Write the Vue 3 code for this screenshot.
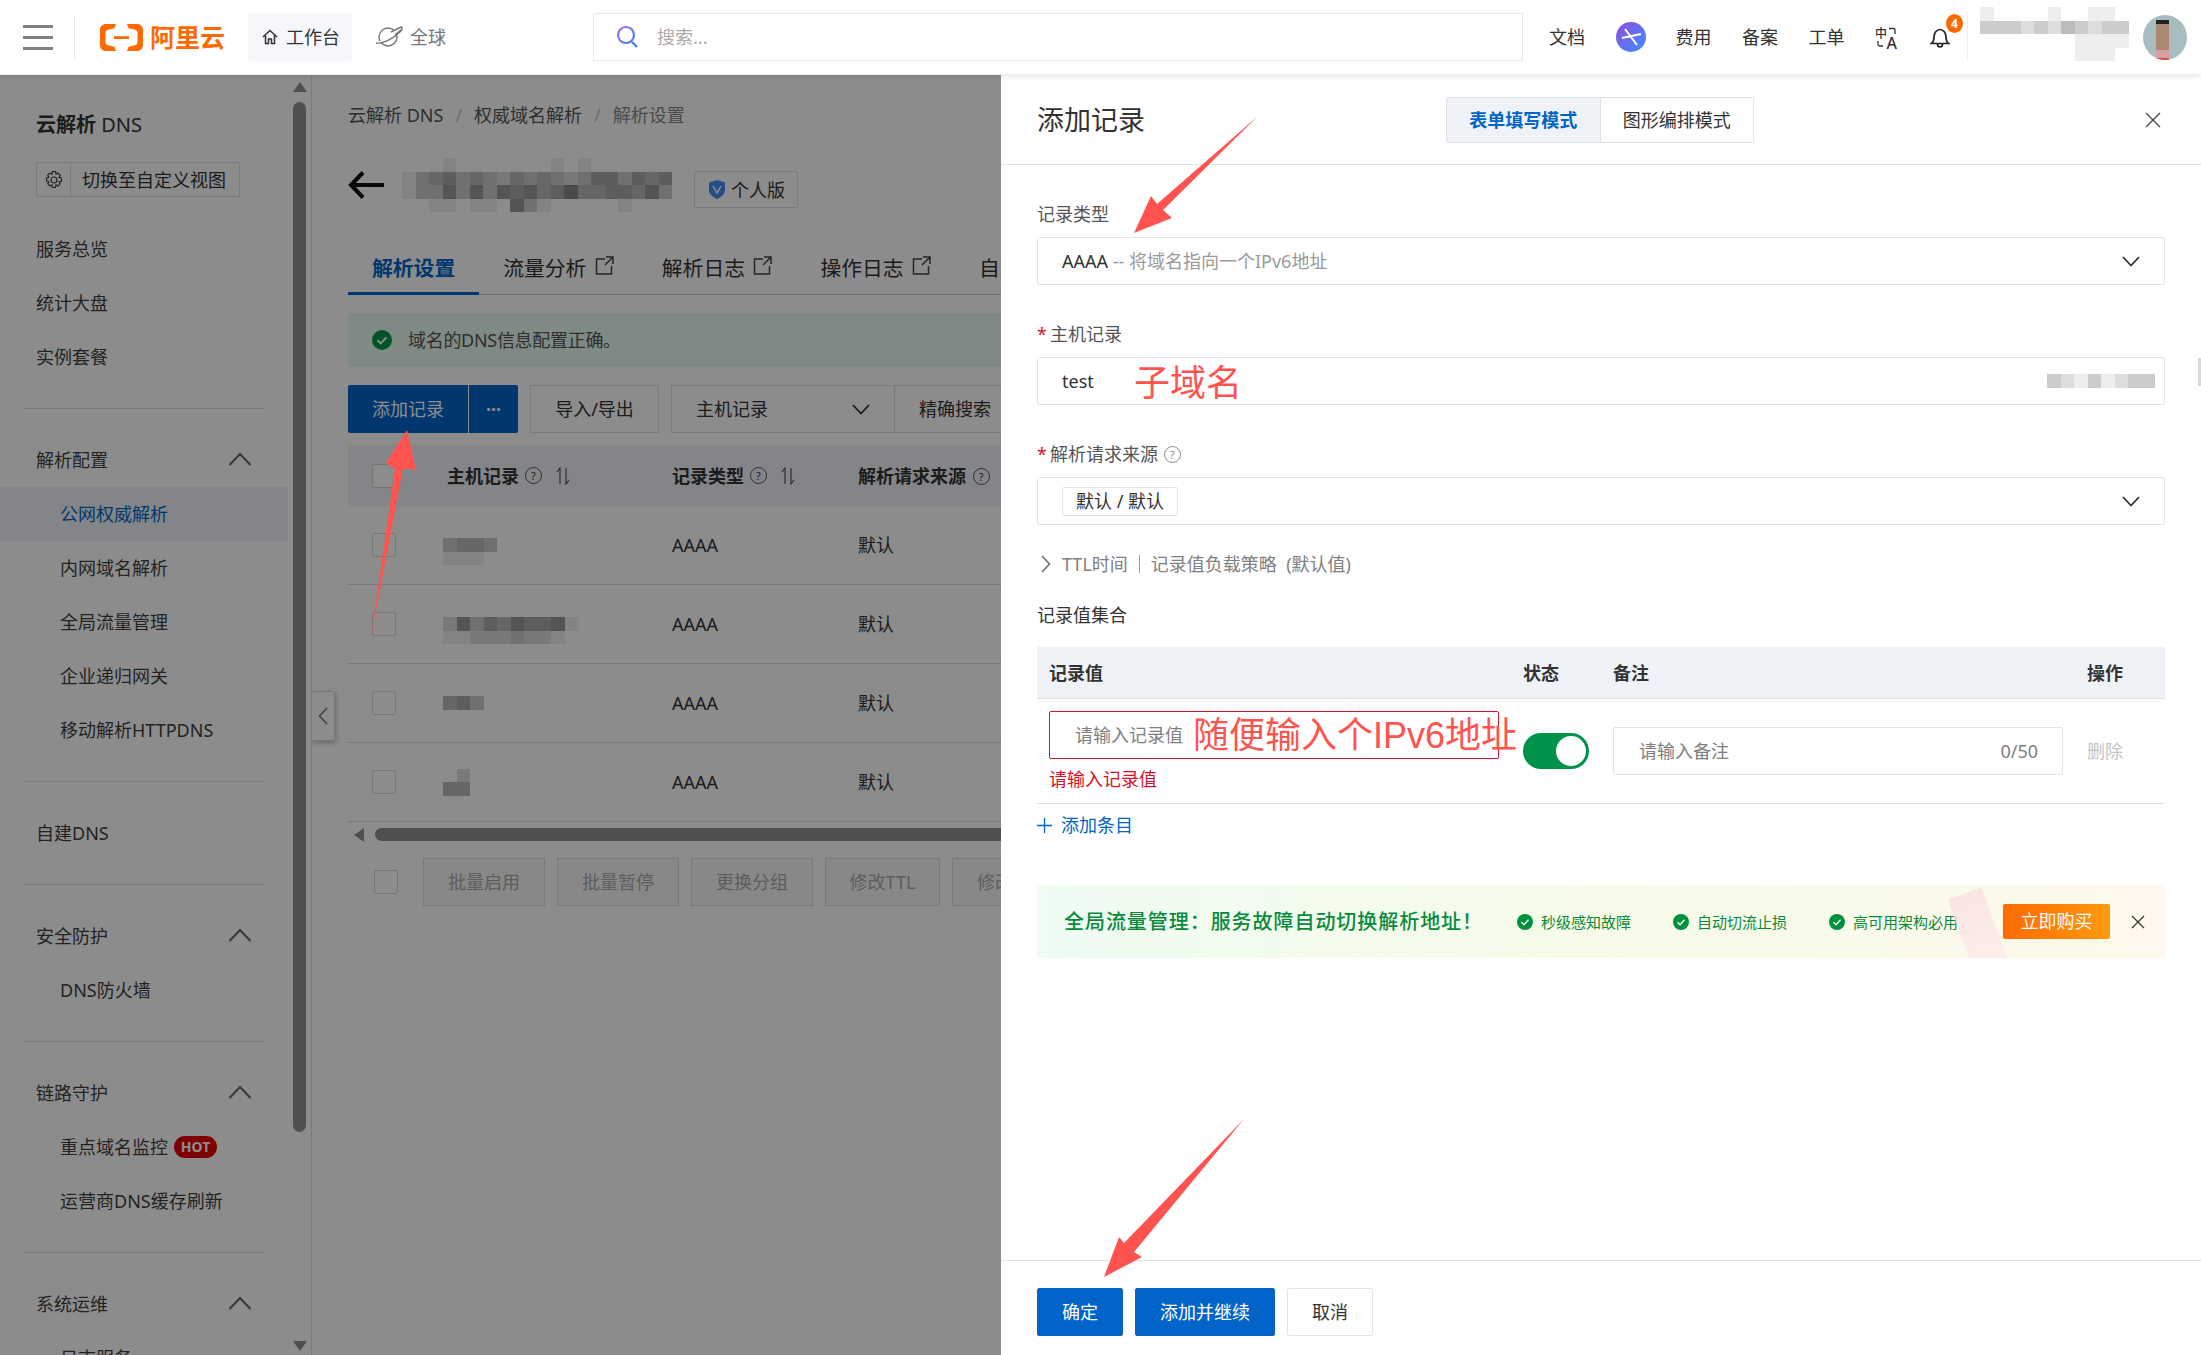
<template>
  <div class="page">
    <!-- 顶栏 -->
    <header class="topbar">
      <div class="burger"><i></i><i></i><i></i></div>
      <div class="logo">
        <svg width="43" height="27" viewBox="0 0 43 27">
          <path fill="#ff6a00" d="M16 0H6C2.5 0 0 2.5 0 6v15c0 3.500 2.500 6 6 6h10l-1.500-4.200-6.500-1.500c-1.500-.4-2.500-1.500-2.500-3V8.700c0-1.500 1-2.600 2.500-3l6.500-1.500z" />
          <path fill="#ff6a00" d="M27 0h10c3.500 0 6 2.500 6 6v15c0 3.500-2.500 6-6 6H27l1.500-4.200 6.500-1.500c1.500-.4 2.500-1.500 2.500-3V8.700c0-1.500-1-2.600-2.500-3l-6.500-1.500z" />
          <rect x="14" y="12.200" width="15" height="2.800" fill="#ff6a00" />
        </svg>
        <span>阿里云</span>
      </div>
      <div class="bench">
        <svg width="16" height="16" viewBox="0 0 16 16" fill="none" stroke="#333" stroke-width="1.500">
          <path d="M1 8l7-6.500L15 8M3.500 6.500V14.500h3V10h3v4.500h3V6.500" />
        </svg>
        <span>工作台</span>
      </div>
      <div class="region">
        <svg width="29" height="24" viewBox="0 0 29 24" fill="none" stroke="#777" stroke-width="1.400">
          <circle cx="13" cy="12" r="9" />
          <path d="M1 18c6 1 16-3 26-13M16 7l10-5c1.500 0 1.500 1.500.5 2.500L20 10" fill="#fff" />
        </svg>
        <span>全球</span>
      </div>
      <div class="search">
        <svg width="24" height="26" viewBox="0 0 24 26" fill="none" stroke-width="2.200">
          <defs>
            <linearGradient id="sg" x1="0" y1="0" x2="1" y2="1">
              <stop offset="0" stop-color="#b06af0" />
              <stop offset="1" stop-color="#3d7bff" />
            </linearGradient>
          </defs>
          <circle cx="10" cy="11" r="8" stroke="url(#sg)" />
          <path d="M16 18l5 5" stroke="#3d7bff" />
        </svg>
        <span>搜索...</span>
      </div>
      <nav class="top-links">
        <span class="w38">文档</span>
        <svg class="spark" width="30" height="30" viewBox="0 0 30 30">
          <defs>
            <linearGradient id="pg" x1="0" y1="0" x2="1" y2="1">
              <stop offset="0" stop-color="#8e4fe0" />
              <stop offset="1" stop-color="#3f8cff" />
            </linearGradient>
          </defs>
          <circle cx="15" cy="15" r="15" fill="url(#pg)" />
          <path d="M9 7l12 16M6 16l19-4" stroke="#fff" stroke-width="2" />
        </svg>
        <span class="w38">费用</span>
        <span class="w38">备案</span>
        <span class="w38">工单</span>
        <span class="trans">
          <svg width="22" height="22" viewBox="0 0 22 22" fill="none" stroke="#333" stroke-width="1.300">
            <path d="M14 1.500h4.500c1 0 1.500.5 1.500 1.500v4M3 14v3.500c0 1 .5 1.500 1.500 1.500H8" />
          </svg>
          <b>中</b><b>A</b>
        </span>
        <span class="bell">
          <svg width="20" height="24" viewBox="0 0 20 24" fill="none" stroke="#222" stroke-width="1.700">
            <path d="M1.500 18.500c2-1.500 2.500-3 2.500-6.500 0-4 2.500-7.500 6-7.500s6 3.500 6 7.500c0 3.500.5 5 2.500 6.500zM7.500 19c0 4 5 4 5 0" />
          </svg>
          <em>4</em>
        </span>
        <span class="top-sep"></span>
        <Mosaic class="name-blur" :size="13.500" :rows="nameBlur" />
        <div class="avatar"><i></i></div>
      </nav>
    </header>

    <div class="body">
      <!-- 左侧导航 -->
      <aside class="sidebar">
        <div class="nav">
          <h2 class="nav-title">云解析 <span>DNS</span></h2>
          <div class="switch-view">
            <span class="gear">
              <svg width="20" height="20" viewBox="0 0 20 20" fill="none" stroke="#444" stroke-width="1.200">
                <path d="M8.500 1.500h3l.5 2.500 2-1 2.300 2.300-1.200 2 2.400.7v3l-2.400.7 1.200 2-2.300 2.300-2-1-.5 2.500h-3l-.5-2.500-2 1-2.300-2.300 1.200-2-2.400-.7v-3l2.400-.7-1.200-2L6 3l2 1z" />
                <circle cx="10" cy="10" r="3" />
              </svg>
            </span>
            <span class="switch-text">切换至自定义视图</span>
          </div>
          <template v-for="(g, gi) in navGroups" :key="gi">
            <div v-if="gi > 0" class="nav-line"></div>
            <div class="nav-group">
              <div v-if="g.title" class="nav-row">
                {{ g.title }}
                <svg v-if="g.fold" class="fold" width="24" height="14" viewBox="0 0 24 14" fill="none" stroke="#666" stroke-width="2">
                  <path d="M1.500 13L12 2l10.500 11" />
                </svg>
              </div>
              <div
                v-for="item in g.items"
                :key="item.text"
                class="nav-row"
                :class="{ sub: g.fold, active: item.active }"
              >
                {{ item.text }}
                <span v-if="item.hot" class="hot">HOT</span>
              </div>
            </div>
          </template>
        </div>
        <div class="side-scroll">
          <i class="tri up"></i>
          <i class="thumb"></i>
          <i class="tri down"></i>
        </div>
      </aside>

      <!-- 解析设置页面 -->
      <main class="main">
        <div class="crumbs">
          <span>云解析 DNS</span><em>/</em><span>权威域名解析</span><em>/</em><span class="last">解析设置</span>
        </div>
        <div class="title-row">
          <svg width="37" height="28" viewBox="0 0 37 28" fill="none" stroke="#111" stroke-width="4">
            <path d="M36 14H3M15 1.500L3 14l12 12.500" />
          </svg>
          <Mosaic class="title-blur" :size="13.500" :rows="titleBlur" />
          <span class="edition">
            <svg width="16" height="19" viewBox="0 0 16 19">
              <path d="M8 0l8 2.500V10c0 4-3.500 7-8 9-4.500-2-8-5-8-9V2.500z" fill="#4a8af0" />
              <path d="M4 6l4 7 4-7" fill="none" stroke="#fff" stroke-width="1.500" />
            </svg>
            个人版
          </span>
        </div>
        <div class="tabs">
          <span class="tab on">解析设置</span>
          <span v-for="t in ['流量分析', '解析日志', '操作日志']" :key="t" class="tab">
            {{ t }}
            <svg width="19" height="19" viewBox="0 0 19 19" fill="none" stroke="#444" stroke-width="1.500">
              <path d="M10 3H1.500v15h15V10M11 1h7v7M18 1l-8 8" />
            </svg>
          </span>
          <span class="tab">自定义</span>
        </div>
        <div class="alert">
          <svg width="20" height="20" viewBox="0 0 20 20">
            <circle cx="10" cy="10" r="10" fill="#009a49" />
            <path d="M5.500 10.200l3.200 3.200 5.800-6" fill="none" stroke="#fff" stroke-width="2" />
          </svg>
          域名的DNS信息配置正确。
        </div>
        <div class="toolbar">
          <div class="btn-add"><span>添加记录</span><span class="more">···</span></div>
          <div class="btn-line w129">导入/导出</div>
          <div class="btn-line host">
            主机记录
            <svg width="18" height="11" viewBox="0 0 18 11" fill="none" stroke="#333" stroke-width="1.800">
              <path d="M1 1l8 8.500L17 1" />
            </svg>
          </div>
          <div class="btn-line exact">精确搜索</div>
        </div>
        <div class="table">
          <div class="t-row t-head">
            <div class="c-check"><i class="box"></i></div>
            <div class="c-host">
              主机记录 <i class="help">?</i>
              <svg class="sort" width="14" height="18" viewBox="0 0 14 18" fill="none" stroke="#555" stroke-width="1.200">
                <path d="M4 17V1L1 5M10 1v16l3-4" />
              </svg>
            </div>
            <div class="c-type">
              记录类型 <i class="help">?</i>
              <svg class="sort" width="14" height="18" viewBox="0 0 14 18" fill="none" stroke="#555" stroke-width="1.200">
                <path d="M4 17V1L1 5M10 1v16l3-4" />
              </svg>
            </div>
            <div class="c-src">解析请求来源 <i class="help">?</i></div>
          </div>
          <div v-for="(r, i) in tableRows" :key="i" class="t-row">
            <div class="c-check"><i class="box"></i></div>
            <div class="c-host"><Mosaic :size="13.500" :rows="r" /></div>
            <div class="c-type">AAAA</div>
            <div class="c-src">默认</div>
          </div>
        </div>
        <div class="h-scroll"><i class="tri left"></i><i class="h-thumb"></i></div>
        <div class="batch">
          <i class="box"></i>
          <span class="b-btn">批量启用</span>
          <span class="b-btn">批量暂停</span>
          <span class="b-btn">更换分组</span>
          <span class="b-btn w115">修改TTL</span>
          <span class="b-btn">修改备注</span>
        </div>
        <div class="collapse">
          <svg width="10" height="18" viewBox="0 0 10 18" fill="none" stroke="#777" stroke-width="1.500">
            <path d="M9 1L1.500 9 9 17" />
          </svg>
        </div>
      </main>
    </div>

    <div class="mask"></div>

    <!-- 添加记录抽屉 -->
    <section class="drawer">
      <div class="d-head">
        <h1>添加记录</h1>
        <div class="mode">
          <span class="mode-on">表单填写模式</span>
          <span>图形编排模式</span>
        </div>
        <svg class="d-close" width="16" height="16" viewBox="0 0 16 16" fill="none" stroke="#444" stroke-width="1.300">
          <path d="M1 1l14 14M15 1L1 15" />
        </svg>
      </div>
      <div class="d-body">
        <div class="field">
          <label>记录类型</label>
          <div class="ctrl">
            <span>AAAA</span><span class="muted">&nbsp;-- 将域名指向一个IPv6地址</span>
            <svg class="arrow" width="18" height="11" viewBox="0 0 18 11" fill="none" stroke="#333" stroke-width="1.800">
              <path d="M1 1l8 8.500L17 1" />
            </svg>
          </div>
        </div>
        <div class="field">
          <label><b>*</b>主机记录</label>
          <div class="ctrl">
            <span>test</span>
            <Mosaic class="suffix" :size="13.500" :rows="suffixBlur" />
          </div>
        </div>
        <div class="field">
          <label><b>*</b>解析请求来源 <i class="help light">?</i></label>
          <div class="ctrl">
            <span class="tag">默认 / 默认</span>
            <svg class="arrow" width="18" height="11" viewBox="0 0 18 11" fill="none" stroke="#333" stroke-width="1.800">
              <path d="M1 1l8 8.500L17 1" />
            </svg>
          </div>
        </div>
        <div class="ttl">
          <svg width="10" height="18" viewBox="0 0 10 18" fill="none" stroke="#666" stroke-width="1.500">
            <path d="M1 1l7.500 8L1 17" />
          </svg>
          <span class="ttl-a">TTL时间</span><i></i><span>记录值负载策略&nbsp;&nbsp;(默认值)</span>
        </div>
        <div class="set-title">记录值集合</div>
        <div class="v-head">
          <span class="vc-val">记录值</span>
          <span class="vc-state">状态</span>
          <span class="vc-note">备注</span>
          <span class="vc-op">操作</span>
        </div>
        <div class="v-row">
          <div class="vc-val">
            <div class="v-input">请输入记录值</div>
            <div class="v-err">请输入记录值</div>
          </div>
          <div class="vc-state"><div class="toggle"><i></i></div></div>
          <div class="vc-note">
            <div class="note-input"><span>请输入备注</span><span>0/50</span></div>
          </div>
          <div class="vc-op del">删除</div>
        </div>
        <div class="add-item">
          <svg width="15" height="15" viewBox="0 0 15 15" stroke="#0064c8" stroke-width="1.300">
            <path d="M7.500 0v15M0 7.500h15" />
          </svg>
          <span>添加条目</span>
        </div>
        <div class="promo">
          <i class="envelope"></i>
          <strong>全局流量管理&#xFF1A;服务故障自动切换解析地址&#xFF01;</strong>
          <span v-for="p in promoItems" :key="p" class="promo-item">
            <svg width="16" height="16" viewBox="0 0 16 16">
              <circle cx="8" cy="8" r="8" fill="#00913f" />
              <path d="M4.500 8.200l2.500 2.500 4.500-5" fill="none" stroke="#fff" stroke-width="1.300" />
            </svg>
            {{ p }}
          </span>
          <span class="buy">立即购买</span>
          <svg width="14" height="14" viewBox="0 0 14 14" fill="none" stroke="#333" stroke-width="1.200">
            <path d="M1 1l12 12M13 1L1 13" />
          </svg>
        </div>
      </div>
      <div class="d-foot">
        <span class="f-btn primary w86">确定</span>
        <span class="f-btn primary w140">添加并继续</span>
        <span class="f-btn w86">取消</span>
      </div>
      <i class="edge-mark"></i>
    </section>

    <!-- 红色标注 -->
    <svg class="marks" width="2201" height="1355" viewBox="0 0 2201 1355">
      <polygon fill="#ff5350" points="1258,116 1163,210 1172,218 1134,233 1151,196 1157,204" />
      <polygon fill="#ff5350" points="371,637 403,468 416,470 407,430 386,463 395,469" />
      <polygon fill="#ff5350" points="1244,1119 1134,1252 1142,1257 1104,1277 1119,1237 1124,1243" />
    </svg>
    <span class="note-a">子域名</span>
    <span class="note-b">随便输入个IPv6地址</span>
  </div>
</template>

<script setup>
import { h } from 'vue'

// 马赛克块: 每个字符是灰度十六进制, 点表示透明
const Mosaic = (props) => {
  const cols = props.rows[0].length
  const cells = props.rows.join('').split('')
  return h(
    'div',
    {
      style: {
        display: 'grid',
        gridTemplateColumns: `repeat(${cols}, ${props.size}px)`,
        gridAutoRows: `${props.size}px`
      }
    },
    cells.map((c) =>
      h('span', { style: { background: c === '.' ? 'transparent' : `#${c}${c}${c}` } })
    )
  )
}
Mosaic.props = ['rows', 'size']

const nameBlur = [
  'eff..ef.ee.',
  'cccdcdbcdcc',
  '.......eeee',
  '.......eee.'
]

const titleBlur = [
  '...e.......e.e......',
  'ecbacbcdbcbcdcaacaba',
  'ecc9c9c9a9ba8bbaab9c',
  '..ee.ee.9ce.....e...'
]

const suffixBlur = ['cdecedcc']

const tableRows = [
  ['....', 'cbbc', 'eee.'],
  ['..........', 'd9cab9aa9e', 'eedddcdde.'],
  ['bac'],
  ['.d', 'bb']
]

const navGroups = [
  { items: [{ text: '服务总览' }, { text: '统计大盘' }, { text: '实例套餐' }] },
  {
    title: '解析配置',
    fold: true,
    items: [
      { text: '公网权威解析', active: true },
      { text: '内网域名解析' },
      { text: '全局流量管理' },
      { text: '企业递归网关' },
      { text: '移动解析HTTPDNS' }
    ]
  },
  { items: [{ text: '自建DNS' }] },
  { title: '安全防护', fold: true, items: [{ text: 'DNS防火墙' }] },
  {
    title: '链路守护',
    fold: true,
    items: [{ text: '重点域名监控', hot: true }, { text: '运营商DNS缓存刷新' }]
  },
  { title: '系统运维', fold: true, items: [{ text: '日志服务' }] }
]

const promoItems = ['秒级感知故障', '自动切流止损', '高可用架构必用']
</script>

<style>
html, body {
  margin: 0;
  background: #fff;
  overflow: hidden;
}
</style>

<style scoped>
.page {
  position: relative;
  width: 2201px;
  height: 1355px;
  overflow: hidden;
  font-family: "Noto Sans", "Noto Sans CJK SC", sans-serif;
  font-size: 18px;
  line-height: 24px;
  color: #333;
  background: #fff;
}

/* 顶栏 */
.topbar {
  position: relative;
  z-index: 5;
  display: flex;
  align-items: center;
  height: 74px;
  background: #fff;
  box-shadow: 0 1px 6px rgba(0, 0, 0, 0.12);
  border-bottom: 1px solid #eee;
  box-sizing: content-box;
}
.burger {
  display: flex;
  flex-direction: column;
  gap: 8px;
  width: 30px;
  margin-left: 23px;
  padding-right: 21px;
  border-right: 1px solid #e8e8e8;
  height: 45px;
  justify-content: center;
}
.burger i {
  display: block;
  height: 3px;
  background: #808080;
}
.logo {
  display: flex;
  align-items: center;
  gap: 7px;
  margin-left: 25px;
  width: 148px;
  color: #ff6a00;
  font-size: 25px;
  font-weight: 700;
}
.bench {
  display: flex;
  align-items: center;
  gap: 8px;
  width: 104px;
  height: 48px;
  padding-left: 14px;
  box-sizing: border-box;
  background: #f5f7fb;
  border-radius: 4px;
}
.region {
  display: flex;
  align-items: center;
  gap: 6px;
  margin-left: 23px;
  color: #777;
}
.search {
  display: flex;
  align-items: center;
  gap: 17px;
  width: 930px;
  height: 48px;
  margin-left: 147px;
  padding-left: 22px;
  box-sizing: border-box;
  border: 1px solid #e8e8e8;
  color: #aaa;
}
.top-links {
  display: flex;
  align-items: center;
  margin-left: 26px;
  color: #333;
}
.w38 {
  margin-right: 30.500px;
}
.spark {
  margin-right: 30px;
}
.trans {
  position: relative;
  display: block;
  width: 22px;
  height: 22px;
  margin-right: 33px;
  margin-top: 1px;
}
.trans svg {
  position: absolute;
  left: 0;
  top: 0;
}
.trans b {
  position: absolute;
  font-weight: 500;
  line-height: 14px;
}
.trans b:nth-of-type(1) {
  left: 0;
  top: 0;
  font-size: 12px;
}
.trans b:nth-of-type(2) {
  right: 0;
  top: 9px;
  font-size: 16px;
}
.bell {
  position: relative;
  display: flex;
  width: 20px;
  margin-right: 17px;
}
.bell em {
  position: absolute;
  left: 16px;
  top: -11px;
  width: 17px;
  height: 19px;
  border-radius: 50%;
  background: #ff6a00;
  color: #fff;
  font-size: 12px;
  font-weight: 700;
  font-style: normal;
  line-height: 19px;
  text-align: center;
}
.top-sep {
  width: 1px;
  height: 46px;
  background: #eee;
  margin-right: 12px;
}
.name-blur {
  width: 149px;
  margin-top: -6px;
}
.avatar {
  position: relative;
  width: 44px;
  height: 45px;
  margin-left: 14px;
  border-radius: 50%;
  overflow: hidden;
  background: #a9bcc0;
}
.avatar i {
  position: absolute;
  left: 13px;
  top: 5px;
  width: 13px;
  height: 40px;
  background: linear-gradient(#222 0 10%, #a88874 10% 75%, #d8a0a0 75% 94%, #d44 94%);
}

.body {
  display: flex;
  height: 1281px;
}

/* 左侧导航 */
.sidebar {
  display: flex;
  flex: none;
  width: 312px;
  border-right: 1px solid #ddd;
  box-sizing: border-box;
  overflow: hidden;
}
.nav {
  width: 288px;
  padding-top: 38px;
  flex: none;
}
.nav-title {
  margin: 0 0 25px 36px;
  font-size: 20px;
  font-weight: 700;
  line-height: 24px;
  color: #333;
}
.nav-title span {
  font-weight: 400;
}
.switch-view {
  display: flex;
  align-items: center;
  width: 204px;
  height: 35px;
  margin: 0 0 25px 36px;
  border: 1px solid #dcdcdc;
  box-sizing: border-box;
  border-radius: 2px;
}
.gear {
  display: flex;
  align-items: center;
  justify-content: center;
  width: 33px;
  height: 33px;
  border-right: 1px solid #dcdcdc;
}
.switch-text {
  margin-left: 11px;
}
.nav-group {
  padding: 0;
}
.nav-line {
  height: 1px;
  margin: 24px 24px;
  background: #dedede;
}
.nav-row {
  display: flex;
  align-items: center;
  height: 54px;
  padding-left: 36px;
  position: relative;
  color: #3f3f3f;
}
.nav-row.sub {
  padding-left: 60px;
}
.nav-row.active {
  background: #eff3f8;
  color: #0064c8;
}
.fold {
  position: absolute;
  left: 228px;
  top: 19px;
}
.hot {
  margin-left: 6px;
  width: 43px;
  height: 22px;
  border-radius: 11px;
  background: #e60000;
  color: #fff;
  font-size: 14px;
  font-weight: 700;
  line-height: 22px;
  text-align: center;
}
.side-scroll {
  display: flex;
  flex-direction: column;
  align-items: center;
  flex: 1;
  padding: 7px 0 5px;
}
.thumb {
  display: block;
  width: 13px;
  height: 1030px;
  margin: 10px 0 auto;
  border-radius: 7px;
  background: #909090;
}
.tri {
  display: block;
  width: 0;
  height: 0;
  border-style: solid;
}
.tri.up {
  border-width: 0 7px 10px;
  border-color: transparent transparent #909090;
}
.tri.down {
  border-width: 10px 7px 0;
  border-color: #909090 transparent transparent;
}
.tri.left {
  border-width: 7px 10px 7px 0;
  border-color: transparent #909090 transparent transparent;
}

/* 主区域 */
.main {
  position: relative;
  flex: 1;
  min-width: 0;
  padding: 28px 0 0 36px;
  overflow: hidden;
}
.crumbs {
  display: flex;
  color: #555;
  white-space: nowrap;
}
.crumbs em {
  margin: 0 12px;
  font-style: normal;
  color: #ccc;
}
.crumbs .last {
  color: #888;
}
.title-row {
  display: flex;
  align-items: center;
  height: 54px;
  margin-top: 31px;
}
.title-blur {
  width: 270px;
  margin-left: 17px;
}
.edition {
  display: flex;
  align-items: center;
  gap: 6px;
  height: 35px;
  margin: 9px 0 0 22px;
  padding: 0 12px 0 14px;
  border: 1px solid #ddd;
  border-radius: 2px;
}
.tabs {
  display: flex;
  height: 39px;
  margin-top: 43px;
  border-bottom: 1px solid #ccc;
  white-space: nowrap;
}
.tab {
  display: block;
  height: 38px;
  padding: 0 24px;
  font-size: 20.800px;
  line-height: 26px;
}
.tab svg {
  margin-left: 3px;
  vertical-align: 1px;
}
.tab.on {
  margin-bottom: -1px;
  height: 37px;
  color: #0064c8;
  font-weight: 700;
  border-bottom: 3px solid #0064c8;
}
.alert {
  display: flex;
  align-items: center;
  gap: 16px;
  height: 54px;
  margin-top: 18px;
  padding-left: 24px;
  background: #e5fbee;
  border-radius: 4px;
  color: #555;
  letter-spacing: -0.3px;
}
.toolbar {
  display: flex;
  height: 48px;
  margin-top: 18px;
  white-space: nowrap;
}
.btn-add {
  display: flex;
  align-items: center;
  width: 170px;
  background: #0064c8;
  color: #fff;
  border-radius: 2px;
}
.btn-add span:first-child {
  width: 120px;
  line-height: 48px;
  text-align: center;
  border-right: 1px solid #fff;
}
.more {
  flex: 1;
  text-align: center;
  font-weight: 700;
}
.btn-line {
  display: flex;
  align-items: center;
  justify-content: center;
  margin-left: 12px;
  border: 1px solid #ddd;
  box-sizing: border-box;
}
.w129 {
  width: 129px;
}
.host {
  justify-content: space-between;
  width: 224px;
  padding: 0 24px;
}
.exact {
  width: 300px;
  margin-left: -1px;
  justify-content: flex-start;
  padding-left: 24px;
}
.table {
  width: 1000px;
  margin-top: 12px;
}
.t-row {
  display: flex;
  align-items: center;
  height: 79px;
  border-bottom: 1px solid #ddd;
  box-sizing: border-box;
}
.t-head {
  height: 61px;
  background: #eff3f8;
  border-bottom: none;
  font-weight: 700;
}
.c-check {
  width: 99px;
  padding-left: 24px;
  box-sizing: border-box;
}
.c-host {
  display: flex;
  align-items: center;
  width: 225px;
}
.c-type {
  display: flex;
  align-items: center;
  width: 186px;
}
.c-src {
  flex: 1;
  white-space: nowrap;
}
.c-src .help {
  margin-left: 2px;
}
.t-row:not(.t-head) .c-host {
  margin-left: -4px;
  margin-right: 4px;
}
.box {
  display: block;
  width: 24px;
  height: 24px;
  border: 1px solid #d8d8d8;
  box-sizing: border-box;
  border-radius: 2px;
  background: #fff;
}
.help {
  display: inline-block;
  width: 15px;
  height: 15px;
  margin-left: 6px;
  border: 1px solid #555;
  border-radius: 50%;
  font-size: 11px;
  font-weight: 400;
  font-style: normal;
  line-height: 15px;
  text-align: center;
  vertical-align: 2px;
}
.help.light {
  margin-left: 1px;
  border-color: #888;
  color: #888;
}
.sort {
  margin-left: 14px;
}
.h-scroll {
  display: flex;
  align-items: center;
  gap: 11px;
  height: 13px;
  margin: 6px 0 0 6px;
}
.h-thumb {
  display: block;
  width: 700px;
  height: 13px;
  border-radius: 7px;
  background: #909090;
}
.batch {
  display: flex;
  align-items: center;
  gap: 12px;
  margin: 17px 0 0 26px;
  white-space: nowrap;
}
.batch .box {
  margin-right: 13px;
}
.b-btn {
  flex: none;
  width: 122px;
  height: 48px;
  border: 1px solid #dcdcdc;
  box-sizing: border-box;
  background: #f7f7f7;
  color: #aaa;
  line-height: 46px;
  text-align: center;
}
.w115 {
  width: 115px;
}
.collapse {
  position: absolute;
  left: 0;
  top: 616px;
  display: flex;
  align-items: center;
  justify-content: center;
  width: 23px;
  height: 50px;
  background: #fff;
  border: 1px solid #ddd;
  border-left: none;
  border-radius: 0 2px 2px 0;
  box-sizing: border-box;
  box-shadow: 1px 2px 5px rgba(0, 0, 0, 0.25);
}

.mask {
  position: absolute;
  left: 0;
  top: 75px;
  right: 0;
  bottom: 0;
  z-index: 2;
  background: rgba(0, 0, 0, 0.45);
}

/* 抽屉 */
.drawer {
  position: absolute;
  left: 1001px;
  top: 75px;
  bottom: 0;
  right: 0;
  z-index: 3;
  display: flex;
  flex-direction: column;
  background: #fff;
}
.d-head {
  display: flex;
  align-items: center;
  flex: none;
  height: 89px;
  padding: 0 36px;
  border-bottom: 1px solid #e3e3e3;
}
.d-head h1 {
  margin: 0;
  width: 409px;
  font-size: 27px;
  font-weight: 400;
  line-height: 36px;
}
.mode {
  display: flex;
  width: 308px;
  height: 46px;
  border: 1px solid #e3e3e3;
  border-radius: 2px;
  box-sizing: border-box;
}
.mode span {
  flex: 1;
  line-height: 44px;
  text-align: center;
}
.mode-on {
  background: #eff3f8;
  color: #0064c8;
  font-weight: 700;
  border-right: 1px solid #e3e3e3;
}
.d-close {
  margin-left: auto;
  margin-right: 4px;
}
.d-body {
  flex: 1;
  padding: 37px 36px 0;
}
.field {
  margin-bottom: 37px;
}
.field label {
  display: block;
  height: 24px;
  margin-bottom: 11px;
  color: #555;
}
.field label b {
  margin-right: 3px;
  color: #d8112b;
  font-weight: 400;
}
.ctrl {
  display: flex;
  align-items: center;
  height: 48px;
  padding: 0 24px 0 24px;
  border: 1px solid #e3e3e3;
  box-sizing: border-box;
  border-radius: 2px;
  position: relative;
}
.muted {
  color: #999;
}
.arrow {
  margin-left: auto;
}
.suffix {
  margin-left: auto;
  margin-right: -15px;
}
.tag {
  padding: 0 13px;
  height: 29px;
  line-height: 27px;
  border: 1px solid #e3e3e3;
  box-sizing: border-box;
  border-radius: 2px;
}
.ttl {
  display: flex;
  align-items: center;
  height: 24px;
  margin-top: -10px;
  padding-left: 4px;
  color: #808080;
}
.ttl-a {
  margin-left: 11px;
}
.ttl i {
  width: 1px;
  height: 18px;
  margin: 0 11px;
  background: #999;
}
.set-title {
  margin-top: 27px;
  color: #333;
}
.v-head {
  display: flex;
  align-items: center;
  height: 52px;
  margin-top: 20px;
  background: #eff3f8;
  border-bottom: 1px solid #e3e3e3;
  box-sizing: border-box;
  font-weight: 700;
  padding-left: 12px;
}
.v-row {
  display: flex;
  align-items: center;
  height: 105px;
  padding: 0 0 0 12px;
  border-bottom: 1px solid #e3e3e3;
  box-sizing: border-box;
}
.vc-val {
  flex: none;
  width: 474px;
}
.vc-state {
  flex: none;
  width: 90px;
}
.vc-note {
  flex: none;
  width: 474px;
}
.vc-op {
  flex: none;
}
.del {
  color: #c4c4c4;
}
.v-input {
  width: 450px;
  height: 48px;
  padding-left: 25px;
  border: 1px solid #d8112b;
  border-radius: 2px;
  box-sizing: border-box;
  line-height: 46px;
  color: #808080;
}
.v-err {
  margin-top: 8px;
  color: #d8112b;
}
.toggle {
  position: relative;
  width: 66px;
  height: 36px;
  border-radius: 18px;
  background: #00924a;
}
.toggle i {
  position: absolute;
  right: 3px;
  top: 3px;
  width: 30px;
  height: 30px;
  border-radius: 50%;
  background: #fff;
}
.note-input {
  display: flex;
  justify-content: space-between;
  width: 450px;
  height: 48px;
  padding: 0 24px 0 25px;
  border: 1px solid #e3e3e3;
  border-radius: 2px;
  box-sizing: border-box;
  line-height: 46px;
  color: #808080;
}
.add-item {
  display: flex;
  align-items: center;
  gap: 9px;
  height: 24px;
  margin-top: 9px;
  color: #0064c8;
}
.promo {
  position: relative;
  display: flex;
  align-items: center;
  height: 73px;
  margin-top: 48px;
  padding: 0 20px 0 27px;
  overflow: hidden;
  background: linear-gradient(90deg, #effcf2, #f6fbe8 50%, #fef9ec);
  color: #088a3c;
  white-space: nowrap;
}
.promo strong {
  font-size: 20px;
  font-weight: 500;
  letter-spacing: 0.950px;
}
.promo-item {
  display: flex;
  align-items: center;
  gap: 8px;
  margin-left: 42px;
  font-size: 15px;
}
.promo strong + .promo-item {
  margin-left: 34px;
}
.envelope {
  position: absolute;
  left: 925px;
  top: 6px;
  width: 36px;
  height: 90px;
  background: linear-gradient(#fbe0e0, #fdeef0);
  opacity: 0.8;
  transform: rotate(-20deg);
}
.buy {
  position: relative;
  width: 107px;
  height: 35px;
  margin-left: auto;
  margin-right: 21px;
  border-radius: 2px;
  background: linear-gradient(90deg, #ff6a00, #ff9a0e);
  color: #fff;
  line-height: 35px;
  text-align: center;
}
.d-foot {
  display: flex;
  gap: 12px;
  flex: none;
  height: 95px;
  padding: 27px 36px 0;
  border-top: 1px solid #e3e3e3;
  box-sizing: border-box;
}
.f-btn {
  height: 48px;
  border: 1px solid #e3e3e3;
  border-radius: 2px;
  box-sizing: border-box;
  line-height: 46px;
  text-align: center;
}
.f-btn.primary {
  background: #0064c8;
  border-color: #0064c8;
  color: #fff;
}
.w86 {
  width: 86px;
}
.w140 {
  width: 140px;
}
.edge-mark {
  position: absolute;
  right: 0;
  top: 283px;
  width: 3px;
  height: 28px;
  background: #d8d8d8;
}

/* 红色标注 */
.marks {
  position: absolute;
  left: 0;
  top: 0;
  z-index: 6;
  pointer-events: none;
}
.note-a,
.note-b {
  position: absolute;
  z-index: 6;
  color: #ff5350;
  white-space: nowrap;
  line-height: 44px;
  font-family: "Liberation Sans", "Noto Sans CJK SC", sans-serif;
}
.note-a {
  left: 1134px;
  top: 362px;
  font-size: 36px;
}
.note-b {
  left: 1193px;
  top: 714px;
  font-size: 36px;
}
</style>
